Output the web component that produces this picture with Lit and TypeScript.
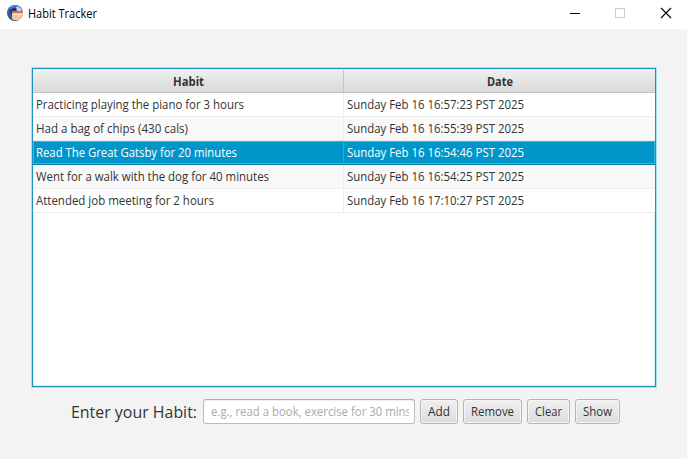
import { LitElement, html, css } from "lit";
import { customElement } from "lit/decorators.js";

const rows: [string, number, string][] = [
  ["Practicing playing the piano for 3 hours", 208, "Sunday Feb 16 16:57:23 PST 2025"],
  ["Had a bag of chips (430 cals)", 152, "Sunday Feb 16 16:55:39 PST 2025"],
  ["Read The Great Gatsby for 20 minutes", 201, "Sunday Feb 16 16:54:46 PST 2025"],
  ["Went for a walk with the dog for 40 minutes", 233, "Sunday Feb 16 16:54:25 PST 2025"],
  ["Attended job meeting for 2 hours", 178, "Sunday Feb 16 17:10:27 PST 2025"],
];
const selected = 2;

// One line of text set to a known advance width.
const line = (text: string, width: number, size = 12, baseline = 16, height = 23) => html`
  <svg class="line" width=${width} height=${height}>
    <text x="0" y=${baseline} font-size=${size} textLength=${width} lengthAdjust="spacingAndGlyphs">${text}</text>
  </svg>`;

@customElement("app-root")
export class AppRoot extends LitElement {
  static styles = css`
    :host { display: flex; flex-direction: column; width: 687px; height: 459px; overflow: hidden;
      background: #f3f3f3; color: #333; font-family: "Open Sans", "Noto Sans", sans-serif; font-size: 12px; box-sizing: border-box; }
    * { box-sizing: border-box; }
    .line { display: block; flex: none; overflow: visible; fill: currentColor; }
    .title { display: flex; height: 29px; background: #fff; color: #000; padding-left: 7px; flex: none; }
    .logo { width: 16px; height: 16px; margin: 5px 5px 0 0; }
    .controls { margin-left: auto; display: block; }
    .table { margin: 39px 31px 0 32px; height: 319px; flex: none; background: #fff; border: 1px solid #1c94bd;
      box-shadow: 0 0 0 1px #a5e2f5, inset 0 0 0 1px #d3f0f9; padding: 1px 0; display: flex; flex-direction: column; }
    .row { display: grid; grid-template-columns: 311px 1fr; height: 24px; border-bottom: 1px solid #ededed; }
    .row:nth-child(odd) { background: #f9f9f9; }
    .row:nth-child(even) { background: #fff; }
    .cell { padding-left: 3px; }
    .cell:first-child { border-right: 1px solid #ededed; }
    .row.selected { background: #0096c9; color: #fff; border: 1px solid #0083b0; border-width: 0 0 1px;
      box-shadow: inset 0 0 0 1px #3fb2da; }
    .selected .cell:first-child { border-color: #31a8d2; }
    .head { display: grid; grid-template-columns: 311px 1fr; height: 23px; flex: none; font-weight: 700;
      background: linear-gradient(#efefef, #d9d9d9); border-bottom: 1px solid #c3c3c3; }
    .head .cell { display: flex; justify-content: center; padding: 0; }
    .head .cell:first-child { border-right: 1px solid #c3c3c3; }
    .form { display: flex; margin: 12px 0 0 71px; height: 25px; }
    .label { width: 132px; }
    .field { width: 212px; margin-right: 5px; border: 1px solid #bcbcbc; border-top-color: #acacac; border-radius: 3px; background: #fff;
      box-shadow: inset 0 1px 1px #eee; color: #aaa; padding: 0 5px 0 7px; overflow: hidden; }
    .clip { overflow: hidden; width: 198px; }
    .btn { display: flex; justify-content: center; margin: 0 5px 0 0; padding: 0; border: 1px solid #b5b5b5; border-radius: 3px; color: #333;
      background: linear-gradient(#f0f0f0, #dcdcdc); box-shadow: inset 0 0 0 1px #f5f5f5; font: inherit; }
    .add { width: 38px; } .remove { width: 59px; } .clear { width: 43px; } .show { width: 45px; }
  `;

  render() {
    return html`
      <header class="title">
        <svg class="logo" viewBox="0 0 16 16">
          <circle cx="8" cy="8" r="8" fill="#315ba2" />
          <path d="M2 3A8 8 0 0 1 14 3L10 6L5 5Z" fill="#527fbe" />
          <path d="M3 6Q6 0 12 4L9 6Q5 6 5 11Z" fill="#173678" />
          <path d="M9 2Q13 1 15 6H10Z" fill="#c9d3e6" />
          <path d="M5 6H16Q16.500 12 12 15Q8 16 5 14Z" fill="#f3c795" />
          <path d="M5 6H15.700V8H5Z" fill="#e0674f" />
          <path d="M6 9H15V10H6Z" fill="#fbe6bd" />
        </svg>
        ${line("Habit Tracker", 69, 12, 18, 28)}
        <svg class="controls" width="138" height="29" viewBox="549 0 138 29" fill="none" shape-rendering="crispEdges">
          <path d="M570 13.500H580" stroke="#000" />
          <path d="M615.500 8.500H624.500V17.500H615.500Z" stroke="#ccc" />
          <path d="M661 8L671 18M671 8L661 18" stroke="#000" stroke-width="1.100" shape-rendering="auto" />
        </svg>
      </header>
      <main class="table">
        <div class="head">
          <div class="cell">${line("Habit", 31)}</div>
          <div class="cell">${line("Date", 26)}</div>
        </div>
        ${rows.map(([habit, width, date], i) => html`
          <div class="row ${i === selected ? "selected" : ""}">
            <div class="cell">${line(habit, width)}</div>
            <div class="cell">${line(date, 177)}</div>
          </div>`)}
      </main>
      <div class="form">
        <div class="label">${line("Enter your Habit:", 126, 16.5, 19, 25)}</div>
        <div class="field"><div class="clip">${line("e.g., read a book, exercise for 30 mins", 200)}</div></div>
        <button class="btn add">${line("Add", 22)}</button>
        <button class="btn remove">${line("Remove", 43)}</button>
        <button class="btn clear">${line("Clear", 27)}</button>
        <button class="btn show">${line("Show", 29)}</button>
      </div>`;
  }
}
